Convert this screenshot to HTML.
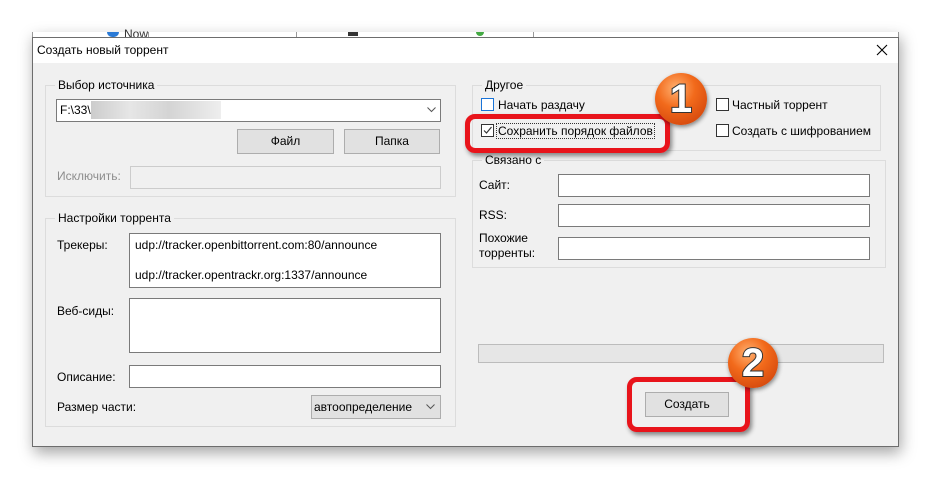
<!DOCTYPE html>
<html><head><meta charset="utf-8"><style>
*{box-sizing:border-box;margin:0;padding:0}
body{width:931px;height:479px;background:#fff;position:relative;overflow:hidden;font-family:"Liberation Sans","DejaVu Sans",sans-serif;font-size:12px;color:#000}
.a{position:absolute}
.t{position:absolute;white-space:nowrap;line-height:14px}
.grp{position:absolute;border:1px solid #dcdcdc}
.gl{position:absolute;background:#f0f0f0;padding:0 3px;white-space:nowrap;line-height:14px;top:-8px;left:9px}
.in{position:absolute;background:#fff;border:1px solid #7a7a7a}
.btn{position:absolute;background:#e1e1e1;border:1px solid #adadad;text-align:center}
.cb{position:absolute;width:13px;height:13px;border:1px solid #333;background:#fff}
.red{position:absolute;border:5px solid #e8141b;border-radius:10px;box-shadow:2px 3px 5px rgba(0,0,0,.45)}
.badge{position:absolute;border-radius:50%;background:radial-gradient(circle at 40% 30%,#ffb070 0%,#f26a1b 40%,#c83a08 100%);box-shadow:1px 2px 4px rgba(0,0,0,.45);color:#fff;font-weight:bold;text-align:center;font-size:40px;-webkit-text-stroke:2px #333;paint-order:stroke fill}
</style></head><body>
<div class="a" style="left:32px;top:32px;width:867px;height:415px;box-shadow:2px 6px 14px rgba(0,0,0,.35)"></div>
<div class="a" style="left:32px;top:32px;width:867px;height:6px;background:#fff;border-left:1px solid #999;border-right:1px solid #999"></div>
<div class="a" style="left:107px;top:32px;width:12px;height:5px;background:#2a7ad6;border-radius:0 0 6px 6px"></div>
<div class="t" style="left:124px;top:27px;font-size:12px;height:10px;overflow:hidden;color:#333">Now</div>
<div class="a" style="left:148px;top:32px;width:1px;height:5px;background:#999"></div>
<div class="a" style="left:296px;top:32px;width:1px;height:5px;background:#999"></div>
<div class="a" style="left:533px;top:32px;width:1px;height:5px;background:#999"></div>
<div class="a" style="left:348px;top:32px;width:10px;height:4px;background:#333"></div>
<div class="a" style="left:476px;top:32px;width:8px;height:4px;background:#4a4;border-radius:0 0 4px 4px"></div>
<div class="a" style="left:32px;top:37px;width:867px;height:410px;background:#f0f0f0;border:1px solid #6d6d6d"></div>
<div class="a" style="left:33px;top:38px;width:865px;height:25px;background:#fff"></div>
<div class="t" style="left:37px;top:43px">Создать новый торрент</div>
<svg class="a" style="left:876px;top:44px" width="12" height="12"><path d="M1 1L11 11M11 1L1 11" stroke="#000" stroke-width="1.1"/></svg>

<div class="grp" style="left:45px;top:85px;width:411px;height:112px"><span class="gl">Выбор источника</span></div>
<div class="in" style="left:56px;top:99px;width:385px;height:23px"></div>
<div class="t" style="left:60px;top:103px">F:\33\</div>
<div class="a" style="left:91px;top:101px;width:130px;height:18px;background:linear-gradient(90deg,#ccc,#e6e6e6 30%,#d4d4d4 60%,#eee)"></div>
<svg class="a" style="left:427px;top:107px" width="9" height="6"><path d="M0.5 0.5L4.5 4.5L8.5 0.5" stroke="#555" fill="none"/></svg>
<div class="btn" style="left:237px;top:129px;width:97px;height:25px;line-height:23px">Файл</div>
<div class="btn" style="left:344px;top:129px;width:96px;height:25px;line-height:23px">Папка</div>
<div class="t" style="left:57px;top:169px;color:#8d8d8d">Исключить:</div>
<div class="a" style="left:130px;top:166px;width:311px;height:23px;background:#f0f0f0;border:1px solid #ccc"></div>

<div class="grp" style="left:45px;top:218px;width:411px;height:209px"><span class="gl">Настройки торрента</span></div>
<div class="t" style="left:57px;top:238px">Трекеры:</div>
<div class="in" style="left:129px;top:233px;width:312px;height:55px"></div>
<div class="t" style="left:135px;top:238px">udp://tracker.openbittorrent.com:80/announce</div>
<div class="t" style="left:135px;top:268px">udp://tracker.opentrackr.org:1337/announce</div>
<div class="t" style="left:57px;top:304px">Веб-сиды:</div>
<div class="in" style="left:129px;top:298px;width:312px;height:55px"></div>
<div class="t" style="left:57px;top:370px">Описание:</div>
<div class="in" style="left:129px;top:365px;width:312px;height:23px"></div>
<div class="t" style="left:57px;top:400px">Размер части:</div>
<div class="a" style="left:311px;top:395px;width:130px;height:24px;background:#e1e1e1;border:1px solid #adadad"></div>
<div class="t" style="left:314px;top:400px">автоопределение</div>
<svg class="a" style="left:426px;top:404px" width="9" height="6"><path d="M0.5 0.5L4.5 4.5L8.5 0.5" stroke="#555" fill="none"/></svg>

<div class="grp" style="left:472px;top:85px;width:409px;height:66px"><span class="gl">Другое</span></div>
<div class="cb" style="left:481px;top:98px;border-color:#1a74d8"></div>
<div class="t" style="left:498px;top:98px">Начать раздачу</div>
<div class="cb" style="left:481px;top:124px"></div>
<svg class="a" style="left:482px;top:125px" width="11" height="11"><path d="M2 5.5L4.5 8L9.5 2" stroke="#333" stroke-width="1.2" fill="none"/></svg>
<div class="t" style="left:497px;top:124px;outline:1px dotted #333;padding:0 1px">Сохранить порядок файлов</div>
<div class="cb" style="left:716px;top:98px"></div>
<div class="t" style="left:732px;top:98px">Частный торрент</div>
<div class="cb" style="left:716px;top:124px"></div>
<div class="t" style="left:732px;top:124px">Создать с шифрованием</div>

<div class="grp" style="left:472px;top:160px;width:414px;height:108px"><span class="gl">Связано с</span></div>
<div class="t" style="left:479px;top:178px">Сайт:</div>
<div class="in" style="left:558px;top:174px;width:312px;height:23px"></div>
<div class="t" style="left:479px;top:208px">RSS:</div>
<div class="in" style="left:558px;top:204px;width:312px;height:23px"></div>
<div class="t" style="left:479px;top:231px;line-height:15px">Похожие<br>торренты:</div>
<div class="in" style="left:558px;top:237px;width:312px;height:23px"></div>

<div class="a" style="left:478px;top:344px;width:406px;height:19px;background:#e6e6e6;border:1px solid #bcbcbc"></div>
<div class="btn" style="left:645px;top:392px;width:84px;height:25px;line-height:23px">Создать</div>

<div class="red" style="left:465px;top:114px;width:205px;height:39px"></div>
<div class="red" style="left:627px;top:377px;width:123px;height:55px"></div>
<div class="badge" style="left:655px;top:73px;width:52px;height:52px;line-height:52px">1</div>
<div class="badge" style="left:728px;top:338px;width:50px;height:50px;line-height:50px">2</div>
</body></html>
